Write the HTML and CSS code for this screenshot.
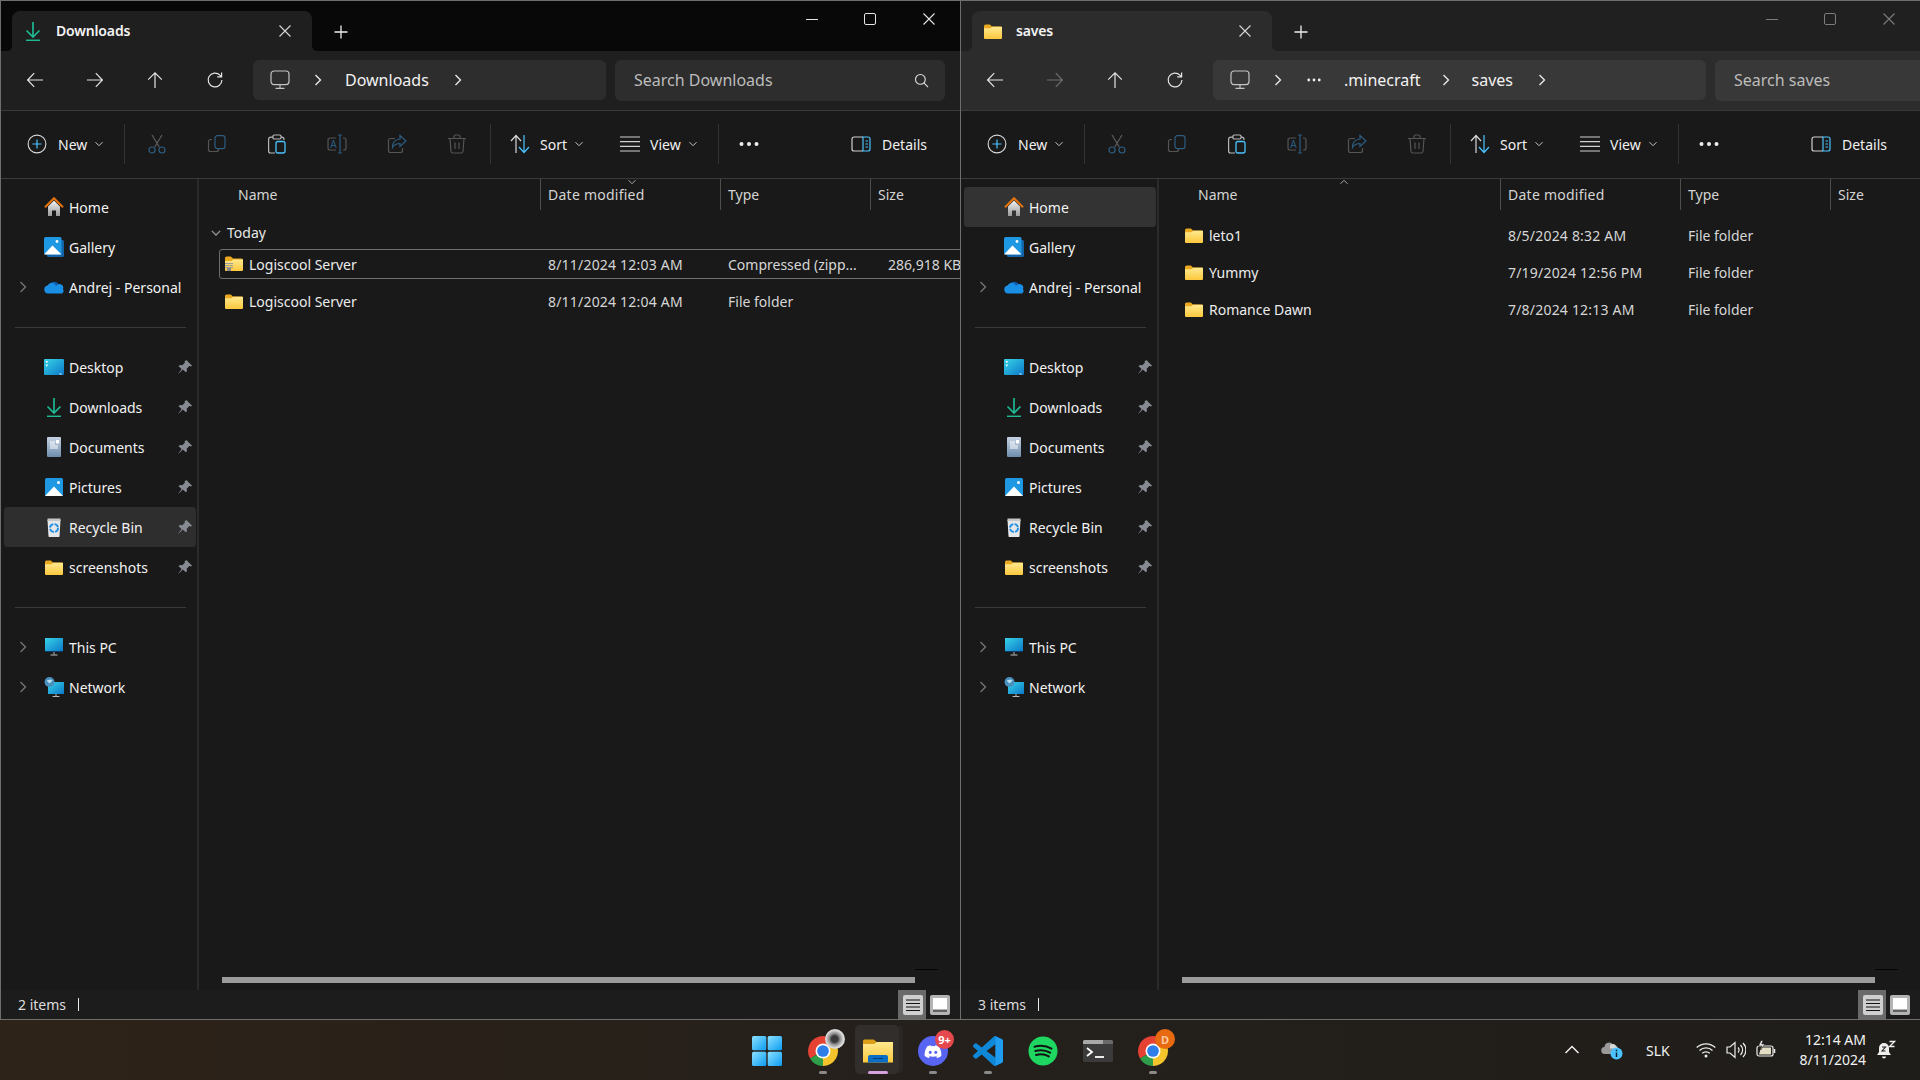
FILE: index.html
```html
<!DOCTYPE html>
<html lang="en">
<head>
<meta charset="utf-8">
<title>File Explorer</title>
<link rel="stylesheet" href="styles.css">
</head>
<body>
<svg class="sprite" aria-hidden="true">
<defs>
<linearGradient id="gFolder" x1="0" y1="0" x2="0" y2="1"><stop offset="0" stop-color="#ffe98f"/><stop offset="1" stop-color="#fcc83c"/></linearGradient>
<linearGradient id="gBlue" x1="0" y1="0" x2="1" y2="1"><stop offset="0" stop-color="#2fb4ec"/><stop offset="1" stop-color="#0f6cc0"/></linearGradient>
<linearGradient id="gCyan" x1="0" y1="0" x2="1" y2="1"><stop offset="0" stop-color="#37d3e8"/><stop offset="1" stop-color="#0c78c8"/></linearGradient>
<linearGradient id="gStart" x1="0" y1="0" x2="1" y2="1"><stop offset="0" stop-color="#8be2ff"/><stop offset="1" stop-color="#0c9bf2"/></linearGradient>
<linearGradient id="gHouse" x1="0" y1="0" x2="0" y2="1"><stop offset="0" stop-color="#f2f2f2"/><stop offset="1" stop-color="#9a9a9a"/></linearGradient>
<linearGradient id="gDoc" x1="0" y1="0" x2="0" y2="1"><stop offset="0" stop-color="#c5d3e2"/><stop offset="1" stop-color="#6f8dad"/></linearGradient>
</defs>
<symbol id="i-back" viewBox="0 0 20 20"><path d="M18 10H3M9.2 3.2 2.6 10l6.600 6.800" fill="none" stroke="currentColor" stroke-width="1.2"/></symbol>
<symbol id="i-fwd" viewBox="0 0 20 20"><path d="M2 10h15M10.800 3.200l6.600 6.800-6.600 6.800" fill="none" stroke="currentColor" stroke-width="1.2"/></symbol>
<symbol id="i-up" viewBox="0 0 20 20"><path d="M10 18V3M3.200 9.600 10 2.800l6.800 6.800" fill="none" stroke="currentColor" stroke-width="1.2"/></symbol>
<symbol id="i-refresh" viewBox="0 0 20 20"><path d="M16.900 10a6.900 6.900 0 1 1-2-4.900l1.600 1.600M16.600 2.400v4.400h-4.400" fill="none" stroke="currentColor" stroke-width="1.2"/></symbol>
<symbol id="i-monitor" viewBox="0 0 20 20"><rect x="1" y="1" width="18" height="13.600" rx="3" fill="none" stroke="#c4c4c4" stroke-width="1.2"/><path d="M10 14.600v3.400M5.500 18.400h9" stroke="#c4c4c4" stroke-width="1.2"/></symbol>
<symbol id="i-chev" viewBox="0 0 16 16"><path d="M5.500 3l5 5-5 5" fill="none" stroke="currentColor" stroke-width="1.3"/></symbol>
<symbol id="i-down" viewBox="0 0 10 10"><path d="M1.500 3.200 5 6.700l3.500-3.500" fill="none" stroke="currentColor" stroke-width="1"/></symbol>
<symbol id="i-new" viewBox="0 0 20 20"><circle cx="10" cy="10" r="8.900" fill="none" stroke="#d8d8d8" stroke-width="1.1"/><path d="M10 5.500v9M5.500 10h9" stroke="#4cc2ff" stroke-width="1.2"/></symbol>
<symbol id="i-cut" viewBox="0 0 20 20"><path d="M5 1l7.400 12.200M15 1 7.600 13.200" stroke="#606060" stroke-width="1.1"/><circle cx="5" cy="16" r="3" fill="none" stroke="#2d5d80" stroke-width="1.2"/><circle cx="15" cy="16" r="3" fill="none" stroke="#2d5d80" stroke-width="1.2"/></symbol>
<symbol id="i-copy" viewBox="0 0 20 20"><path d="M5 5.500H3.500a2 2 0 0 0-2 2v8a2 2 0 0 0 2 2h6a2 2 0 0 0 2-2v-1" fill="none" stroke="#555" stroke-width="1.2"/><rect x="8" y="1.600" width="10" height="13" rx="2.400" fill="none" stroke="#2d5d80" stroke-width="1.2"/></symbol>
<symbol id="i-paste" viewBox="0 0 20 20"><path d="M6 3.200H3.600a2 2 0 0 0-2 2V17a2 2 0 0 0 2 2H8M14 3.200h1a2 2 0 0 1 2 2V6" fill="none" stroke="#b8b8b8" stroke-width="1.2"/><rect x="6" y="1" width="8" height="4" rx="1.200" fill="none" stroke="#b8b8b8" stroke-width="1.2"/><rect x="9" y="7.500" width="9" height="11.500" rx="2" fill="none" stroke="#4cc2ff" stroke-width="1.3"/></symbol>
<symbol id="i-share" viewBox="0 0 20 20"><path d="M8 4.500H3.500a2 2 0 0 0-2 2v10a2 2 0 0 0 2 2h10a2 2 0 0 0 2-2V14" fill="none" stroke="#555" stroke-width="1.2"/><path d="M13 1.500l6 5.500-6 5.500V9.500c-4 0-6 1.500-7.500 4 0-5 3-8 7.500-8.500z" fill="none" stroke="#2d5d80" stroke-width="1.2"/></symbol>
<symbol id="i-del" viewBox="0 0 20 20"><path d="M1 4.500h18M7 4.500V2.500a1.500 1.500 0 0 1 1.500-1.500h3a1.500 1.500 0 0 1 1.500 1.500v2M3 4.500l1 13a1.800 1.800 0 0 0 1.800 1.500h8.400a1.800 1.800 0 0 0 1.800-1.500l1-13M8 8.500v6.500M12 8.500v6.500" fill="none" stroke="#555" stroke-width="1.2"/></symbol>
<symbol id="i-sort" viewBox="0 0 20 20"><path d="M6 19V2M1 7l5-5.500L11 7" fill="none" stroke="#d8d8d8" stroke-width="1.2"/><path d="M14 1v17M9 13l5 5.500 5-5.500" fill="none" stroke="#4cc2ff" stroke-width="1.2"/></symbol>
<symbol id="i-view" viewBox="0 0 20 20"><path d="M0 3h20M0 7.700h20M0 12.300h20M0 17h20" stroke="#cfcfcf" stroke-width="1.200"/></symbol>
<symbol id="i-dots" viewBox="0 0 20 20"><circle cx="2.500" cy="10" r="2" fill="#eee"/><circle cx="10" cy="10" r="2" fill="#eee"/><circle cx="17.500" cy="10" r="2" fill="#eee"/></symbol>
<symbol id="i-details" viewBox="0 0 20 20"><path d="M12 3H3a2 2 0 0 0-2 2v10a2 2 0 0 0 2 2h9" fill="none" stroke="#cfcfcf" stroke-width="1.200"/><path d="M12 3h5a2 2 0 0 1 2 2v10a2 2 0 0 1-2 2h-5zM14.500 7h2.500M14.500 10h2.500M14.500 13h2.500" fill="none" stroke="#4cc2ff" stroke-width="1.200"/></symbol>
<symbol id="i-search" viewBox="0 0 16 16"><circle cx="6.800" cy="6.800" r="5.200" fill="none" stroke="#ddd" stroke-width="1.200"/><path d="M10.600 10.600l4.400 4.400" stroke="#ddd" stroke-width="1.200"/></symbol>
<symbol id="i-x" viewBox="0 0 12 12"><path d="M.5.500l11 11M11.500.500l-11 11" stroke="currentColor" stroke-width="1.100"/></symbol>
<symbol id="i-plus" viewBox="0 0 14 14"><path d="M7 .5v13M.5 7h13" stroke="currentColor" stroke-width="1.300"/></symbol>
<symbol id="i-folder" viewBox="0 0 20 20"><path d="M1 5a1.500 1.500 0 0 1 1.500-1.500h4.300l2.200 2h8.500A1.500 1.500 0 0 1 19 7v2H1z" fill="#eaa91f"/><path d="M1 7.200h6.500l1.800-1.400h9.700V17a1 1 0 0 1-1 1H2a1 1 0 0 1-1-1z" fill="url(#gFolder)"/></symbol>
<symbol id="i-zip" viewBox="0 0 20 20"><path d="M1 4a1.500 1.500 0 0 1 1.500-1.500h4.300l2.200 2h8.500A1.500 1.500 0 0 1 19 6v2H1z" fill="#eaa91f"/><path d="M1 7h6.500l1.800-1.400h9.700V16a1 1 0 0 1-1 1H2a1 1 0 0 1-1-1z" fill="url(#gFolder)"/><path d="M1 9.500h8M1 11.500h8M1 13.500h8" stroke="#9b9b9b" stroke-width="1.200"/><rect x="3" y="14" width="4" height="3" fill="#8a8a8a"/></symbol>
<symbol id="i-home" viewBox="0 0 20 20"><path d="M4 9.500 10 3.500l6 6V19h-4v-5.500H8V19H4z" fill="url(#gHouse)"/><path d="M1 10.200 10 1.200l9 9" fill="none" stroke="#e8730c" stroke-width="2"/></symbol>
<symbol id="i-gallery" viewBox="0 0 20 20"><rect x="3" y="3" width="17" height="17" rx="1.500" fill="#1465a8"/><rect x="0" y="0" width="17.500" height="17.500" rx="1.500" fill="#1e98e2"/><path d="M0 17.500 8.500 8.500l9 9z" fill="#fff"/><circle cx="13" cy="4.500" r="1.400" fill="#fff"/></symbol>
<symbol id="i-cloud" viewBox="0 0 20 20"><path d="M4.500 9.500a5.500 5.500 0 0 1 10-2.300 4 4 0 0 1 4.500 4H3z" fill="#0f5eb0"/><path d="M4 16.500a4 4 0 0 1-.5-7.900A4.500 4.500 0 0 1 12 9.500a3.500 3.500 0 0 1 7 2.500 3.500 3.500 0 0 1-1 4.500z" fill="#1a8fe6"/></symbol>
<symbol id="i-desktop" viewBox="0 0 20 20"><rect x="0" y="2" width="20" height="16" rx="1" fill="url(#gCyan)"/><rect x="2" y="4" width="1.600" height="1.600" fill="#fff"/><rect x="2" y="7.500" width="1.600" height="1.600" fill="#fff"/><rect x="15.500" y="16.500" width="2" height="1" fill="#fff"/></symbol>
<symbol id="i-dl" viewBox="0 0 20 20"><path d="M10 1v14.500M3.500 9.500 10 16l6.500-6.500" fill="none" stroke="#1eb892" stroke-width="1.700"/><path d="M3 19.300h14" stroke="#1eb892" stroke-width="1.500"/></symbol>
<symbol id="i-docs" viewBox="0 0 20 20"><rect x="3" y="0" width="14" height="20" rx="1" fill="url(#gDoc)"/><path d="M6 5h5M6 7h5M6 9h8M6 11h8" stroke="#fff" stroke-width="1"/><rect x="12" y="3" width="3" height="3.500" fill="#fff"/></symbol>
<symbol id="i-pics" viewBox="0 0 20 20"><rect x="1" y="1" width="18" height="18" rx="1.500" fill="#1e98e2"/><path d="M1 19l9-9.500 9 9.500z" fill="#fff"/><circle cx="14.500" cy="5.500" r="1.500" fill="#fff"/></symbol>
<symbol id="i-bin" viewBox="0 0 20 20"><path d="M3.500 3h13l-1 16.500a.8.800 0 0 1-.8.500H5.300a.8.800 0 0 1-.8-.5z" fill="#e4e6e8"/><path d="M3.500 1.500h13V4h-13z" fill="#c4c6c8"/><circle cx="10" cy="11" r="4" fill="none" stroke="#1e8fe0" stroke-width="1.800" stroke-dasharray="5 1.300"/></symbol>
<symbol id="i-pc" viewBox="0 0 20 20"><rect x="1" y="1" width="18" height="13.500" fill="url(#gCyan)"/><path d="M1 14.500h18" stroke="#0a3b66" stroke-width="1"/><path d="M10 15v2.500M6.500 18h7" stroke="#bbb" stroke-width="1"/></symbol>
<symbol id="i-net" viewBox="0 0 20 20"><rect x="4" y="5" width="16" height="12" fill="url(#gCyan)"/><path d="M12 17v2M8.500 19.500h7" stroke="#bbb" stroke-width="1"/><circle cx="5.500" cy="5" r="5" fill="#4a90bd"/><path d="M2.500 3.500l4-1 2 1-3 3z" fill="#b9dff2"/></symbol>
<symbol id="i-pin" viewBox="0 0 14 14"><path d="M8.200 .8l5 5-1.300.7-1.100-.3-2.300 2.300.2 2.200-1 1-2.600-2.600L1.200 13 1 12.800l3-4L1.400 6.300l1-1 2.200.2L6.900 3.200 6.600 2.100z" fill="#878c92"/></symbol>
<symbol id="t-start" viewBox="0 0 30 30"><rect x="0" y="0" width="14.300" height="14.300" rx="1.500" fill="url(#gStart)"/><rect x="15.700" y="0" width="14.300" height="14.300" rx="1.500" fill="url(#gStart)"/><rect x="0" y="15.700" width="14.300" height="14.300" rx="1.500" fill="url(#gStart)"/><rect x="15.700" y="15.700" width="14.300" height="14.300" rx="1.500" fill="url(#gStart)"/></symbol>
<symbol id="t-chrome" viewBox="0 0 48 48"><path d="M24 24 41.320 14A20 20 0 0 0 6.680 34z" fill="#e64234"/><path d="M24 24 6.680 34A20 20 0 0 0 24 44z" fill="#2f9e4a"/><path d="M24 24V44A20 20 0 0 0 41.320 14z" fill="#f5c32c"/><circle cx="24" cy="24" r="10" fill="#fff"/><circle cx="24" cy="24" r="7.800" fill="#2f7de8"/></symbol>
<symbol id="t-explorer" viewBox="0 0 30 30"><path d="M0 5a1.500 1.500 0 0 1 1.500-1.500h9l4 3H30V12H0z" fill="#dc9f17"/><path d="M0 8h11l3-2h16v20.500H0z" fill="url(#gFolder)"/><path d="M5 26.500V21a2 2 0 0 1 2-2h16a2 2 0 0 1 2 2v5.500z" fill="#0a6fc4"/><path d="M10 22.500h10" stroke="#063f78" stroke-width="1"/></symbol>
<symbol id="t-discord" viewBox="0 0 30 30"><circle cx="15" cy="15" r="15" fill="#5865f2"/><g transform="translate(6.600 7.300) scale(.7)"><path fill="#fff" d="M20.317 4.370a19.791 19.791 0 0 0-4.885-1.515.074.074 0 0 0-.079.037c-.21.375-.444.864-.608 1.250a18.270 18.270 0 0 0-5.487 0 12.640 12.640 0 0 0-.617-1.250.077.077 0 0 0-.079-.037A19.736 19.736 0 0 0 3.677 4.370a.07.07 0 0 0-.032.027C.533 9.046-.32 13.580.099 18.057a.082.082 0 0 0 .031.057 19.900 19.900 0 0 0 5.993 3.030.078.078 0 0 0 .084-.028 14.090 14.090 0 0 0 1.226-1.994.076.076 0 0 0-.041-.106 13.107 13.107 0 0 1-1.872-.892.077.077 0 0 1-.008-.128 10.200 10.200 0 0 0 .372-.292.074.074 0 0 1 .077-.01c3.928 1.793 8.180 1.793 12.062 0a.074.074 0 0 1 .078.01c.12.098.246.198.373.292a.077.077 0 0 1-.006.127 12.299 12.299 0 0 1-1.873.892.077.077 0 0 0-.041.107c.36.698.772 1.362 1.225 1.993a.076.076 0 0 0 .084.028 19.839 19.839 0 0 0 6.002-3.030.077.077 0 0 0 .032-.054c.5-5.177-.838-9.674-3.549-13.660a.061.061 0 0 0-.031-.03zM8.020 15.330c-1.183 0-2.157-1.085-2.157-2.419 0-1.333.956-2.419 2.157-2.419 1.210 0 2.176 1.096 2.157 2.420 0 1.333-.956 2.418-2.157 2.418zm7.975 0c-1.183 0-2.157-1.085-2.157-2.419 0-1.333.955-2.419 2.157-2.419 1.210 0 2.176 1.096 2.157 2.420 0 1.333-.946 2.418-2.157 2.418z"/></g></symbol>
<symbol id="t-code" viewBox="0 0 100 100"><path fill-rule="evenodd" fill="#0d87d6" d="M70.900 99.300a6.200 6.200 0 0 0 4.900-.2l20.600-9.900a6.200 6.200 0 0 0 3.500-5.600V16.400a6.200 6.200 0 0 0-3.500-5.600L75.800.9a6.200 6.200 0 0 0-7.100 1.200L29.300 38 12.100 25a4.200 4.200 0 0 0-5.300.2L1.300 30.200a4.200 4.200 0 0 0 0 6.200L16.200 50 1.400 63.600a4.200 4.200 0 0 0 0 6.200l5.500 5a4.200 4.200 0 0 0 5.300.2L29.300 62l39.400 36zM75 27.300 45.100 50 75 72.700z"/><path fill="#1f9cf0" d="M75 27.300V.5l21.400 10.300a6.200 6.200 0 0 1 3.600 5.600v67.200a6.200 6.200 0 0 1-3.600 5.600L75 99.500V72.700z"/></symbol>
<symbol id="t-spotify" viewBox="0 0 30 30"><circle cx="15" cy="15" r="14.500" fill="#1ed760"/><path d="M6.500 10.800c5.500-1.500 12-1 17 1.800M7.300 15c4.700-1.200 10.500-.8 14.800 1.700M8 19c4-1 9-.7 12.800 1.400" fill="none" stroke="#121212" stroke-width="2" stroke-linecap="round"/></symbol>
<symbol id="t-term" viewBox="0 0 30 22"><rect width="30" height="22" rx="1.500" fill="#3b3b3b"/><path d="M0 1.500A1.500 1.500 0 0 1 1.500 0H20v4H0z" fill="#a8a8a8"/><path d="M20 0h8.500A1.500 1.500 0 0 1 30 1.500V4H20z" fill="#6a6a6a"/><path d="M4 8l5 4-5 4" fill="none" stroke="#fff" stroke-width="1.800"/><path d="M12 17h9" stroke="#fff" stroke-width="1.800"/></symbol>
<symbol id="s-up" viewBox="0 0 16 16"><path d="M1.500 11 8 4.500l6.500 6.500" fill="none" stroke="#eee" stroke-width="1.500"/></symbol>
<symbol id="s-cloud" viewBox="0 0 22 22"><path d="M4 15a3.500 3.500 0 0 1-.5-7A4.500 4.500 0 0 1 12 6a3.500 3.500 0 0 1 4 3v6z" fill="#9a9a9a"/><path d="M9 6a4 4 0 0 1 6 1 3 3 0 0 1 2 2.500H9z" fill="#d8d8d8"/><circle cx="15.500" cy="14.500" r="6" fill="#4cc2ff"/><path d="M15.500 13.500v4.500M15.500 10.800v1.400" stroke="#0b2030" stroke-width="1.500"/></symbol>
<symbol id="s-wifi" viewBox="0 0 20 20"><path d="M.7 7.500a13.500 13.500 0 0 1 18.600 0M3.500 10.500a9.500 9.500 0 0 1 13 0M6.200 13.300a5.500 5.500 0 0 1 7.600 0" fill="none" stroke="#eee" stroke-width="1.300"/><circle cx="10" cy="16" r="1.500" fill="#eee"/></symbol>
<symbol id="s-vol" viewBox="0 0 20 20"><path d="M1 7h3l5-4.500v15L4 13H1z" fill="none" stroke="#eee" stroke-width="1.200"/><path d="M12 7.500a3.500 3.500 0 0 1 0 5M14.500 5a7 7 0 0 1 0 10M17 3a10 10 0 0 1 0 14" fill="none" stroke="#eee" stroke-width="1.200"/></symbol>
<symbol id="s-bat" viewBox="0 0 20 20"><rect x="1" y="6" width="16" height="10" rx="2" fill="none" stroke="#eee" stroke-width="1.200"/><path d="M18.500 9v4" stroke="#eee" stroke-width="1.500"/><path d="M3 14.500 5 7.500h10v7z" fill="#e4dfc4"/><path d="M5 .5 2.500 6H6L4.500 10 9 4H5.800L7 .5z" fill="#eee" stroke="#201d1a" stroke-width=".6"/></symbol>
<symbol id="s-bell" viewBox="0 0 20 20"><path d="M8 3a5 5 0 0 1 5 5v4l2 3H1l2-3V8a5 5 0 0 1 5-5z" fill="#eee"/><path d="M6 16.500a2 2 0 0 0 4 0z" fill="#eee"/><path d="M6 7h3.500L6 11h3.500" fill="none" stroke="#201d1a" stroke-width="1.100"/><path d="M13.500 1.500h5l-5 5h5" fill="none" stroke="#eee" stroke-width="1.300"/></symbol>
</svg>

<main class="desktop">
<section class="win win-active">
  <header class="strip">
    <div class="tab"><svg class="ico20"><use href="#i-dl"/></svg><span class="tab-title">Downloads</span><svg class="tab-x"><use href="#i-x"/></svg></div>
    <svg class="tab-plus"><use href="#i-plus"/></svg>
    <div class="caption">
      <span class="cap-btn"><span class="cap-min"></span></span>
      <span class="cap-btn"><span class="cap-max"></span></span>
      <span class="cap-btn"><svg class="cap-x"><use href="#i-x"/></svg></span>
    </div>
  </header>
  <nav class="nav">
    <span class="nav-btn"><svg class="ico20"><use href="#i-back"/></svg></span>
    <span class="nav-btn"><svg class="ico20"><use href="#i-fwd"/></svg></span>
    <span class="nav-btn"><svg class="ico20"><use href="#i-up"/></svg></span>
    <span class="nav-btn"><svg class="ico20"><use href="#i-refresh"/></svg></span>
    <div class="addr">
      <svg class="ico20 addr-pc"><use href="#i-monitor"/></svg>
      <svg class="crumb-chev c1"><use href="#i-chev"/></svg>
      <span class="crumb c-dl">Downloads</span>
      <svg class="crumb-chev c-end"><use href="#i-chev"/></svg>
    </div>
    <div class="search"><span class="search-text">Search Downloads</span><svg class="search-ico"><use href="#i-search"/></svg></div>
  </nav>
  <div class="cmd">
    <span class="cmd-new"><svg class="ico20"><use href="#i-new"/></svg><span class="cmd-lbl">New</span><svg class="ico10"><use href="#i-down"/></svg></span>
    <span class="sep"></span>
    <span class="cmd-icons">
      <span class="cmd-ic"><svg class="ico20"><use href="#i-cut"/></svg></span>
      <span class="cmd-ic"><svg class="ico20"><use href="#i-copy"/></svg></span>
      <span class="cmd-ic"><svg class="ico20"><use href="#i-paste"/></svg></span>
      <span class="cmd-ic"><svg class="ico20" viewBox="0 0 20 20"><path d="M9 4H3a2 2 0 0 0-2 2v8a2 2 0 0 0 2 2h6M16 4h1a2 2 0 0 1 2 2v8a2 2 0 0 1-2 2h-1" fill="none" stroke="#555" stroke-width="1.2"/><path d="M13 1v18M11 1h4M11 19h4" fill="none" stroke="#2d5d80" stroke-width="1.2"/><text class="rename-a" x="6.500" y="14">A</text></svg></span>
      <span class="cmd-ic"><svg class="ico20"><use href="#i-share"/></svg></span>
      <span class="cmd-ic"><svg class="ico20"><use href="#i-del"/></svg></span>
    </span>
    <span class="sep sep-2"></span>
    <span class="cmd-sort"><svg class="ico20"><use href="#i-sort"/></svg><span class="cmd-lbl">Sort</span><svg class="ico10"><use href="#i-down"/></svg></span>
    <span class="cmd-view"><svg class="ico20"><use href="#i-view"/></svg><span class="cmd-lbl">View</span><svg class="ico10"><use href="#i-down"/></svg></span>
    <span class="sep"></span>
    <svg class="ico20 cmd-dots"><use href="#i-dots"/></svg>
    <span class="cmd-details"><svg class="ico20"><use href="#i-details"/></svg><span class="cmd-lbl">Details</span></span>
  </div>
  <div class="body">
    <aside class="side">
      <div class="row"><span class="tw"></span><svg class="ico20 ni"><use href="#i-home"/></svg><span class="nt">Home</span></div>
      <div class="row"><span class="tw"></span><svg class="ico20 ni"><use href="#i-gallery"/></svg><span class="nt">Gallery</span></div>
      <div class="row"><svg class="tw"><use href="#i-chev"/></svg><svg class="ico20 ni"><use href="#i-cloud"/></svg><span class="nt">Andrej - Personal</span></div>
      <div class="hr"></div>
      <div class="row"><span class="tw"></span><svg class="ico20 ni"><use href="#i-desktop"/></svg><span class="nt">Desktop</span><svg class="pin"><use href="#i-pin"/></svg></div>
      <div class="row"><span class="tw"></span><svg class="ico20 ni"><use href="#i-dl"/></svg><span class="nt">Downloads</span><svg class="pin"><use href="#i-pin"/></svg></div>
      <div class="row"><span class="tw"></span><svg class="ico20 ni"><use href="#i-docs"/></svg><span class="nt">Documents</span><svg class="pin"><use href="#i-pin"/></svg></div>
      <div class="row"><span class="tw"></span><svg class="ico20 ni"><use href="#i-pics"/></svg><span class="nt">Pictures</span><svg class="pin"><use href="#i-pin"/></svg></div>
      <div class="row row-sel"><span class="tw"></span><svg class="ico20 ni"><use href="#i-bin"/></svg><span class="nt">Recycle Bin</span><svg class="pin"><use href="#i-pin"/></svg></div>
      <div class="row"><span class="tw"></span><svg class="ico20 ni"><use href="#i-folder"/></svg><span class="nt">screenshots</span><svg class="pin"><use href="#i-pin"/></svg></div>
      <div class="hr"></div>
      <div class="row"><svg class="tw"><use href="#i-chev"/></svg><svg class="ico20 ni"><use href="#i-pc"/></svg><span class="nt">This PC</span></div>
      <div class="row"><svg class="tw"><use href="#i-chev"/></svg><svg class="ico20 ni"><use href="#i-net"/></svg><span class="nt">Network</span></div>
    </aside>
    <div class="main">
      <div class="head">
        <span class="hc hc-name">Name</span>
        <span class="hc hc-date">Date modified<svg class="sort-mark sort-date"><use href="#i-down"/></svg></span>
        <span class="hc">Type</span>
        <span class="hc">Size</span>
      </div>
      <div class="rows">
        <div class="group"><svg class="group-chev"><use href="#i-down"/></svg><span>Today</span></div>
        <div class="file file-focus"><span class="fn"><svg class="fi"><use href="#i-zip"/></svg>Logiscool Server</span><span class="fc fd">8/11/2024 12:03 AM</span><span class="fc">Compressed (zipp...</span><span class="fc fs">286,918 KB</span></div>
        <div class="file"><span class="fn"><svg class="fi"><use href="#i-folder"/></svg>Logiscool Server</span><span class="fc fd">8/11/2024 12:04 AM</span><span class="fc">File folder</span><span class="fc fs"></span></div>
      </div>
      <div class="hline"></div>
      <div class="hscroll"></div>
    </div>
  </div>
  <footer class="status">
    <span class="status-text">2 items</span><span class="status-bar"></span>
    <span class="toggle toggle-on"><svg class="tg" viewBox="0 0 20 20"><rect width="20" height="20" rx="2" fill="#cfcfcf"/><path d="M3 5h14M3 8.500h14M3 12h14M3 15.500h14" stroke="#111" stroke-width="1"/></svg></span>
    <span class="toggle"><svg class="tg" viewBox="0 0 20 20"><rect width="20" height="20" rx="2" fill="#b4b4b4"/><rect x="3" y="3" width="14" height="11" fill="#fff"/><path d="M3 16h14" stroke="#111" stroke-width="1"/></svg></span>
  </footer>
</section>

<section class="win win-idle">
  <header class="strip">
    <div class="tab"><svg class="ico20"><use href="#i-folder"/></svg><span class="tab-title">saves</span><svg class="tab-x"><use href="#i-x"/></svg></div>
    <svg class="tab-plus"><use href="#i-plus"/></svg>
    <div class="caption">
      <span class="cap-btn"><span class="cap-min"></span></span>
      <span class="cap-btn"><span class="cap-max"></span></span>
      <span class="cap-btn"><svg class="cap-x"><use href="#i-x"/></svg></span>
    </div>
  </header>
  <nav class="nav">
    <span class="nav-btn"><svg class="ico20"><use href="#i-back"/></svg></span>
    <span class="nav-btn nav-off"><svg class="ico20"><use href="#i-fwd"/></svg></span>
    <span class="nav-btn"><svg class="ico20"><use href="#i-up"/></svg></span>
    <span class="nav-btn"><svg class="ico20"><use href="#i-refresh"/></svg></span>
    <div class="addr addr-wide">
      <svg class="ico20 addr-pc"><use href="#i-monitor"/></svg>
      <svg class="crumb-chev c1"><use href="#i-chev"/></svg>
      <svg class="ico20 c-more"><use href="#i-dots"/></svg>
      <span class="crumb c-mc">.minecraft</span>
      <svg class="crumb-chev c-mid"><use href="#i-chev"/></svg>
      <span class="crumb c-saves">saves</span>
      <svg class="crumb-chev c-end"><use href="#i-chev"/></svg>
    </div>
    <div class="search"><span class="search-text">Search saves</span></div>
  </nav>
  <div class="cmd">
    <span class="cmd-new"><svg class="ico20"><use href="#i-new"/></svg><span class="cmd-lbl">New</span><svg class="ico10"><use href="#i-down"/></svg></span>
    <span class="sep"></span>
    <span class="cmd-icons">
      <span class="cmd-ic"><svg class="ico20"><use href="#i-cut"/></svg></span>
      <span class="cmd-ic"><svg class="ico20"><use href="#i-copy"/></svg></span>
      <span class="cmd-ic"><svg class="ico20"><use href="#i-paste"/></svg></span>
      <span class="cmd-ic"><svg class="ico20" viewBox="0 0 20 20"><path d="M9 4H3a2 2 0 0 0-2 2v8a2 2 0 0 0 2 2h6M16 4h1a2 2 0 0 1 2 2v8a2 2 0 0 1-2 2h-1" fill="none" stroke="#555" stroke-width="1.2"/><path d="M13 1v18M11 1h4M11 19h4" fill="none" stroke="#2d5d80" stroke-width="1.2"/><text class="rename-a" x="6.500" y="14">A</text></svg></span>
      <span class="cmd-ic"><svg class="ico20"><use href="#i-share"/></svg></span>
      <span class="cmd-ic"><svg class="ico20"><use href="#i-del"/></svg></span>
    </span>
    <span class="sep sep-2"></span>
    <span class="cmd-sort"><svg class="ico20"><use href="#i-sort"/></svg><span class="cmd-lbl">Sort</span><svg class="ico10"><use href="#i-down"/></svg></span>
    <span class="cmd-view"><svg class="ico20"><use href="#i-view"/></svg><span class="cmd-lbl">View</span><svg class="ico10"><use href="#i-down"/></svg></span>
    <span class="sep"></span>
    <svg class="ico20 cmd-dots"><use href="#i-dots"/></svg>
    <span class="cmd-details"><svg class="ico20"><use href="#i-details"/></svg><span class="cmd-lbl">Details</span></span>
  </div>
  <div class="body">
    <aside class="side">
      <div class="row row-sel"><span class="tw"></span><svg class="ico20 ni"><use href="#i-home"/></svg><span class="nt">Home</span></div>
      <div class="row"><span class="tw"></span><svg class="ico20 ni"><use href="#i-gallery"/></svg><span class="nt">Gallery</span></div>
      <div class="row"><svg class="tw"><use href="#i-chev"/></svg><svg class="ico20 ni"><use href="#i-cloud"/></svg><span class="nt">Andrej - Personal</span></div>
      <div class="hr"></div>
      <div class="row"><span class="tw"></span><svg class="ico20 ni"><use href="#i-desktop"/></svg><span class="nt">Desktop</span><svg class="pin"><use href="#i-pin"/></svg></div>
      <div class="row"><span class="tw"></span><svg class="ico20 ni"><use href="#i-dl"/></svg><span class="nt">Downloads</span><svg class="pin"><use href="#i-pin"/></svg></div>
      <div class="row"><span class="tw"></span><svg class="ico20 ni"><use href="#i-docs"/></svg><span class="nt">Documents</span><svg class="pin"><use href="#i-pin"/></svg></div>
      <div class="row"><span class="tw"></span><svg class="ico20 ni"><use href="#i-pics"/></svg><span class="nt">Pictures</span><svg class="pin"><use href="#i-pin"/></svg></div>
      <div class="row"><span class="tw"></span><svg class="ico20 ni"><use href="#i-bin"/></svg><span class="nt">Recycle Bin</span><svg class="pin"><use href="#i-pin"/></svg></div>
      <div class="row"><span class="tw"></span><svg class="ico20 ni"><use href="#i-folder"/></svg><span class="nt">screenshots</span><svg class="pin"><use href="#i-pin"/></svg></div>
      <div class="hr"></div>
      <div class="row"><svg class="tw"><use href="#i-chev"/></svg><svg class="ico20 ni"><use href="#i-pc"/></svg><span class="nt">This PC</span></div>
      <div class="row"><svg class="tw"><use href="#i-chev"/></svg><svg class="ico20 ni"><use href="#i-net"/></svg><span class="nt">Network</span></div>
    </aside>
    <div class="main">
      <div class="head">
        <span class="hc hc-name">Name<svg class="sort-mark sort-name"><use href="#i-down"/></svg></span>
        <span class="hc hc-date">Date modified</span>
        <span class="hc">Type</span>
        <span class="hc">Size</span>
      </div>
      <div class="rows">
        <div class="file"><span class="fn"><svg class="fi"><use href="#i-folder"/></svg>leto1</span><span class="fc fd">8/5/2024 8:32 AM</span><span class="fc">File folder</span><span class="fc fs"></span></div>
        <div class="file"><span class="fn"><svg class="fi"><use href="#i-folder"/></svg>Yummy</span><span class="fc fd">7/19/2024 12:56 PM</span><span class="fc">File folder</span><span class="fc fs"></span></div>
        <div class="file"><span class="fn"><svg class="fi"><use href="#i-folder"/></svg>Romance Dawn</span><span class="fc fd">7/8/2024 12:13 AM</span><span class="fc">File folder</span><span class="fc fs"></span></div>
      </div>
      <div class="hline"></div>
      <div class="hscroll"></div>
    </div>
  </div>
  <footer class="status">
    <span class="status-text">3 items</span><span class="status-bar"></span>
    <span class="toggle toggle-on"><svg class="tg" viewBox="0 0 20 20"><rect width="20" height="20" rx="2" fill="#cfcfcf"/><path d="M3 5h14M3 8.500h14M3 12h14M3 15.500h14" stroke="#111" stroke-width="1"/></svg></span>
    <span class="toggle"><svg class="tg" viewBox="0 0 20 20"><rect width="20" height="20" rx="2" fill="#b4b4b4"/><rect x="3" y="3" width="14" height="11" fill="#fff"/><path d="M3 16h14" stroke="#111" stroke-width="1"/></svg></span>
  </footer>
</section>
</main>

<footer class="taskbar">
  <div class="apps">
    <span class="app"><svg class="t30 t-start"><use href="#t-start"/></svg></span>
    <span class="app"><svg class="t36"><use href="#t-chrome"/></svg><span class="badge badge-photo"></span><span class="dot"></span></span>
    <span class="app app-open"><svg class="t30"><use href="#t-explorer"/></svg><span class="dot dot-active"></span></span>
    <span class="app"><svg class="t30"><use href="#t-discord"/></svg><span class="badge badge-red">9+</span><span class="dot"></span></span>
    <span class="app"><svg class="t30"><use href="#t-code"/></svg><span class="dot"></span></span>
    <span class="app"><svg class="t30"><use href="#t-spotify"/></svg></span>
    <span class="app"><svg class="term"><use href="#t-term"/></svg></span>
    <span class="app"><svg class="t36"><use href="#t-chrome"/></svg><span class="badge badge-orange">D</span><span class="dot"></span></span>
  </div>
  <div class="tray">
    <svg class="tr-up"><use href="#s-up"/></svg>
    <svg class="tr-cloud"><use href="#s-cloud"/></svg>
    <span class="tr-lang">SLK</span>
    <svg class="tr-ico tr-wifi"><use href="#s-wifi"/></svg>
    <svg class="tr-ico tr-vol"><use href="#s-vol"/></svg>
    <svg class="tr-ico tr-bat"><use href="#s-bat"/></svg>
    <span class="clock"><span>12:14 AM</span><span>8/11/2024</span></span>
    <svg class="tr-ico tr-bell"><use href="#s-bell"/></svg>
  </div>
</footer>
</body>
</html>
```
FILE: styles.css
```css
* { box-sizing: border-box; }
html, body { margin: 0; padding: 0; }
body {
  width: 1920px; height: 1080px; overflow: hidden;
  background: #191919; color: #e8e8e8;
  font-family: "Noto Sans", "Open Sans", sans-serif; font-size: 14px;
  display: flex; flex-direction: column;
}
svg { display: block; flex: none; }
.sprite { width: 0; height: 0; }

.desktop { display: flex; height: 1020px; flex: none; }
.win {
  width: 960px; height: 1020px; overflow: hidden;
  display: flex; flex-direction: column;
  border: 1px solid #6e6e6e; border-right: 0;
}
.win-active { --strip: #080808; --bar: #1f1f1f; --field: #2d2d2d; --cap: #e4e4e4; --sel: #2e2e2e; }
.win-idle { --strip: #202020; --bar: #2c2c2c; --field: #383838; --cap: #7c7c7c; --sel: #333333; }

.ico20 { width: 20px; height: 20px; }
.ico10 { width: 10px; height: 10px; color: #c8c8c8; }
.rename-a { font-family: "Noto Sans", sans-serif; font-size: 10px; fill: #2d5d80; text-anchor: middle; }

/* tab strip */
.strip { height: 50px; flex: none; background: var(--strip); display: flex; align-items: flex-end; }
.tab {
  position: relative; margin-left: 11px; width: 300px; height: 40px;
  background: var(--bar); border-radius: 8px 8px 0 0;
  display: flex; align-items: center; padding-left: 11px; padding-bottom: 1px;
}
.tab::before, .tab::after { content: ""; position: absolute; bottom: 0; width: 5px; height: 5px; }
.tab::before { left: -5px; background: radial-gradient(circle at 0 0, transparent 5px, var(--bar) 5px); }
.tab::after { right: -5px; background: radial-gradient(circle at 100% 0, transparent 5px, var(--bar) 5px); }
.tab-title { margin-left: 13px; font-weight: 600; letter-spacing: -.15px; color: #f4f4f4; flex: 1; }
.tab-x { width: 12px; height: 12px; margin-right: 21px; color: #d8d8d8; }
.tab-plus { width: 14px; height: 14px; margin: 0 0 12px 22px; color: #eee; }
.caption { margin-left: auto; align-self: flex-start; display: flex; padding-right: 2px; color: var(--cap); }
.cap-btn { width: 58.5px; height: 36px; display: flex; align-items: center; justify-content: center; }
.cap-min { width: 12px; height: 1px; background: var(--cap); }
.cap-max { width: 12px; height: 12px; border: 1px solid var(--cap); border-radius: 2px; }
.cap-x { width: 12px; height: 12px; }

/* navigation */
.nav { height: 60px; flex: none; background: var(--bar); border-bottom: 1px solid #3a3a3a; display: flex; align-items: center; padding: 0 0 1px 4px; }
.nav-btn { width: 60px; flex: none; display: flex; justify-content: center; color: #e4e4e4; }
.nav-off { color: #6e6e6e; }
.addr { margin-left: 8px; width: 353px; height: 40px; background: var(--field); border-radius: 6px; display: flex; align-items: center; font-size: 16px; color: #f2f2f2; flex: none; }
.addr-wide { width: 493px; }
.addr-pc { margin-left: 17px; }
.crumb-chev { width: 16px; height: 16px; color: #eee; }
.c1 { margin-left: 20px; }
.c-dl { margin-left: 19px; }
.c-end { margin-left: 21px; }
.c-more { width: 14px; height: 14px; margin-left: 21px; }
.c-mc { margin-left: 23px; }
.c-mid { margin-left: 17px; }
.c-saves { margin-left: 18px; }
.search { margin-left: 9px; width: 330px; height: 41px; background: var(--field); border-radius: 6px; display: flex; align-items: center; padding-left: 19px; flex: none; font-size: 16px; color: #bcbcbc; }
.search-text { flex: 1; }
.search-ico { width: 15px; height: 15px; margin-right: 16px; }

/* command bar */
.cmd { height: 68px; flex: none; background: #191919; border-bottom: 1px solid #3a3a3a; display: flex; align-items: center; padding-bottom: 1px; }
.cmd-lbl { color: #f0f0f0; }
.cmd-new { margin-left: 26px; width: 97px; display: flex; align-items: center; }
.cmd-new .cmd-lbl { margin: 0 6px 0 11px; width: 30px; }
.sep { width: 1px; height: 40px; background: #333; flex: none; }
.sep-2 { margin-left: 3px; }
.cmd-icons { display: flex; margin-left: 2px; }
.cmd-ic { width: 60px; display: flex; justify-content: center; }
.cmd-sort { margin-left: 19px; width: 110px; display: flex; align-items: center; }
.cmd-sort .cmd-lbl { margin: 0 7px 0 10px; width: 27px; }
.cmd-view { width: 98px; display: flex; align-items: center; }
.cmd-view .cmd-lbl { margin: 0 6px 0 10px; width: 32px; }
.cmd-dots { margin-left: 20px; }
.cmd-details { margin-left: 92px; display: flex; align-items: center; }
.cmd-details .cmd-lbl { margin-left: 11px; }

/* body */
.body { flex: 1; min-height: 0; display: flex; background: #191919; }
.side { width: 198px; flex: none; padding-top: 8px; border-right: 2px solid #2b2b2b; }
.row { height: 40px; width: 192px; margin-left: 3px; display: flex; align-items: center; border-radius: 4px; color: #f2f2f2; }
.row-sel { background: var(--sel); }
.tw { width: 16px; height: 16px; margin-left: 11px; color: #777; flex: none; }
.ni { margin-left: 13px; }
.nt { margin-left: 5px; flex: 1; white-space: nowrap; }
.pin { width: 16px; height: 16px; margin-right: 3px; }
.hr { height: 1px; margin: 20px 11px 19px 14px; background: #3a3a3a; }

.main { flex: 1; min-width: 0; display: flex; flex-direction: column; overflow: hidden; }
.head { height: 31px; flex: none; display: grid; grid-template-columns: 341px 180px 150px 1fr; color: #d4d4d4; }
.hc { position: relative; border-left: 1px solid #4e4e4e; padding: 6px 0 0 7px; }
.hc-name { border-left: 0; padding-left: 39px; }
.hc-date { letter-spacing: .25px; }
.sort-mark { position: absolute; top: -2px; width: 10px; height: 10px; color: #a8a8a8; }
.sort-date { left: 86px; }
.sort-name { left: 180px; transform: scaleY(-1); }
.rows { padding: 10px 0 0 20px; display: flex; flex-direction: column; gap: 7px; }
.group { height: 21px; margin-left: -10px; margin-top: 2px; margin-bottom: -1px; display: flex; align-items: center; color: #e8e8e8; padding-left: 1px; }
.group-chev { width: 12px; height: 12px; margin-right: 5px; color: #9a9a9a; }
.file { height: 30px; flex: none; display: grid; grid-template-columns: 321px 180px 150px 120px; align-items: center; border: 1px solid transparent; margin-right: -40px; color: #d6d6d6; white-space: nowrap; }
.file-focus { border-color: #6e6e6e; border-radius: 3px; }
.fn { display: flex; align-items: center; padding-left: 4px; color: #ececec; }
.fi { width: 20px; height: 20px; margin-right: 5px; }
.fc { padding-left: 7px; }
.fd { letter-spacing: .2px; }
.fs { padding-left: 17px; }
.hline { margin: auto 0 7px 716px; width: 23px; height: 1px; background: #050505; flex: none; }
.hscroll { margin: 0 0 7px 23px; width: 693px; height: 6px; background: #9b9b9b; flex: none; }

.status { height: 29px; flex: none; background: #1c1c1c; display: flex; align-items: center; padding: 0 10px 0 17px; color: #dcdcdc; }
.status-bar { width: 1px; height: 13px; margin-left: 12px; background: #e8e8e8; }
.toggle { height: 29px; display: flex; align-items: center; }
.toggle-on { margin-left: auto; width: 28px; padding-left: 2px; background: #6a6a6a; justify-content: center; }
.toggle:not(.toggle-on) { margin-left: 4px; }
.tg { width: 20px; height: 20px; }

/* taskbar */
.taskbar { height: 60px; flex: none; display: grid; grid-template-columns: 1fr auto 1fr; background: linear-gradient(90deg, #2e2318 0%, #25201b 45%, #1f1d1a 100%); }
.apps { grid-column: 2; display: flex; height: 60px; }
.app { position: relative; width: 55px; height: 60px; display: flex; align-items: center; justify-content: center; padding-top: 1px; }
.t30 { width: 30px; height: 30px; }
.t36 { width: 36px; height: 36px; }
.t-start { margin-right: 2px; }
.term { width: 30px; height: 22px; }
.app-open::before { content: ""; position: absolute; left: 5px; top: 5px; width: 44px; height: 49px; background: #312e2b; border-radius: 5px; box-shadow: 5px 0 0 -1px #2a2724; }
.app-open svg { position: relative; }
.dot { position: absolute; bottom: 6px; left: 50%; width: 8px; height: 3px; margin-left: -4px; background: #8a8a8a; border-radius: 2px; }
.dot-active { width: 20px; margin-left: -10px; background: #d9a0e0; }
.badge { position: absolute; display: flex; align-items: center; justify-content: center; border-radius: 50%; }
.badge-photo { left: 30px; top: 9px; width: 20px; height: 20px; background: radial-gradient(circle at 48% 50%, #3a3a3a 0 22%, #8e8e8e 38%, #dedede 62%, #a0a0a0 100%); }
.badge-red { left: 30px; top: 10px; width: 19px; height: 19px; background: #e5484d; color: #fff; font-size: 11px; font-weight: 700; }
.badge-orange { left: 30px; top: 9px; width: 20px; height: 20px; background: #e86a10; color: #ffc9a0; font-size: 11px; font-weight: 700; }

.tray { grid-column: 3; display: flex; align-items: center; justify-content: flex-end; color: #f2f2f2; }
.tr-up { width: 16px; height: 16px; }
.tr-cloud { width: 22px; height: 22px; margin-left: 21px; }
.tr-lang { margin-left: 23px; font-size: 14px; width: 27px; }
.tr-ico { width: 20px; height: 20px; }
.tr-wifi { margin-left: 23px; }
.tr-vol { margin-left: 10px; }
.tr-bat { margin-left: 10px; }
.clock { margin-left: 10px; display: flex; flex-direction: column; align-items: flex-end; line-height: 20px; width: 80px; }
.tr-bell { margin: 0 24px 0 10px; }
```
